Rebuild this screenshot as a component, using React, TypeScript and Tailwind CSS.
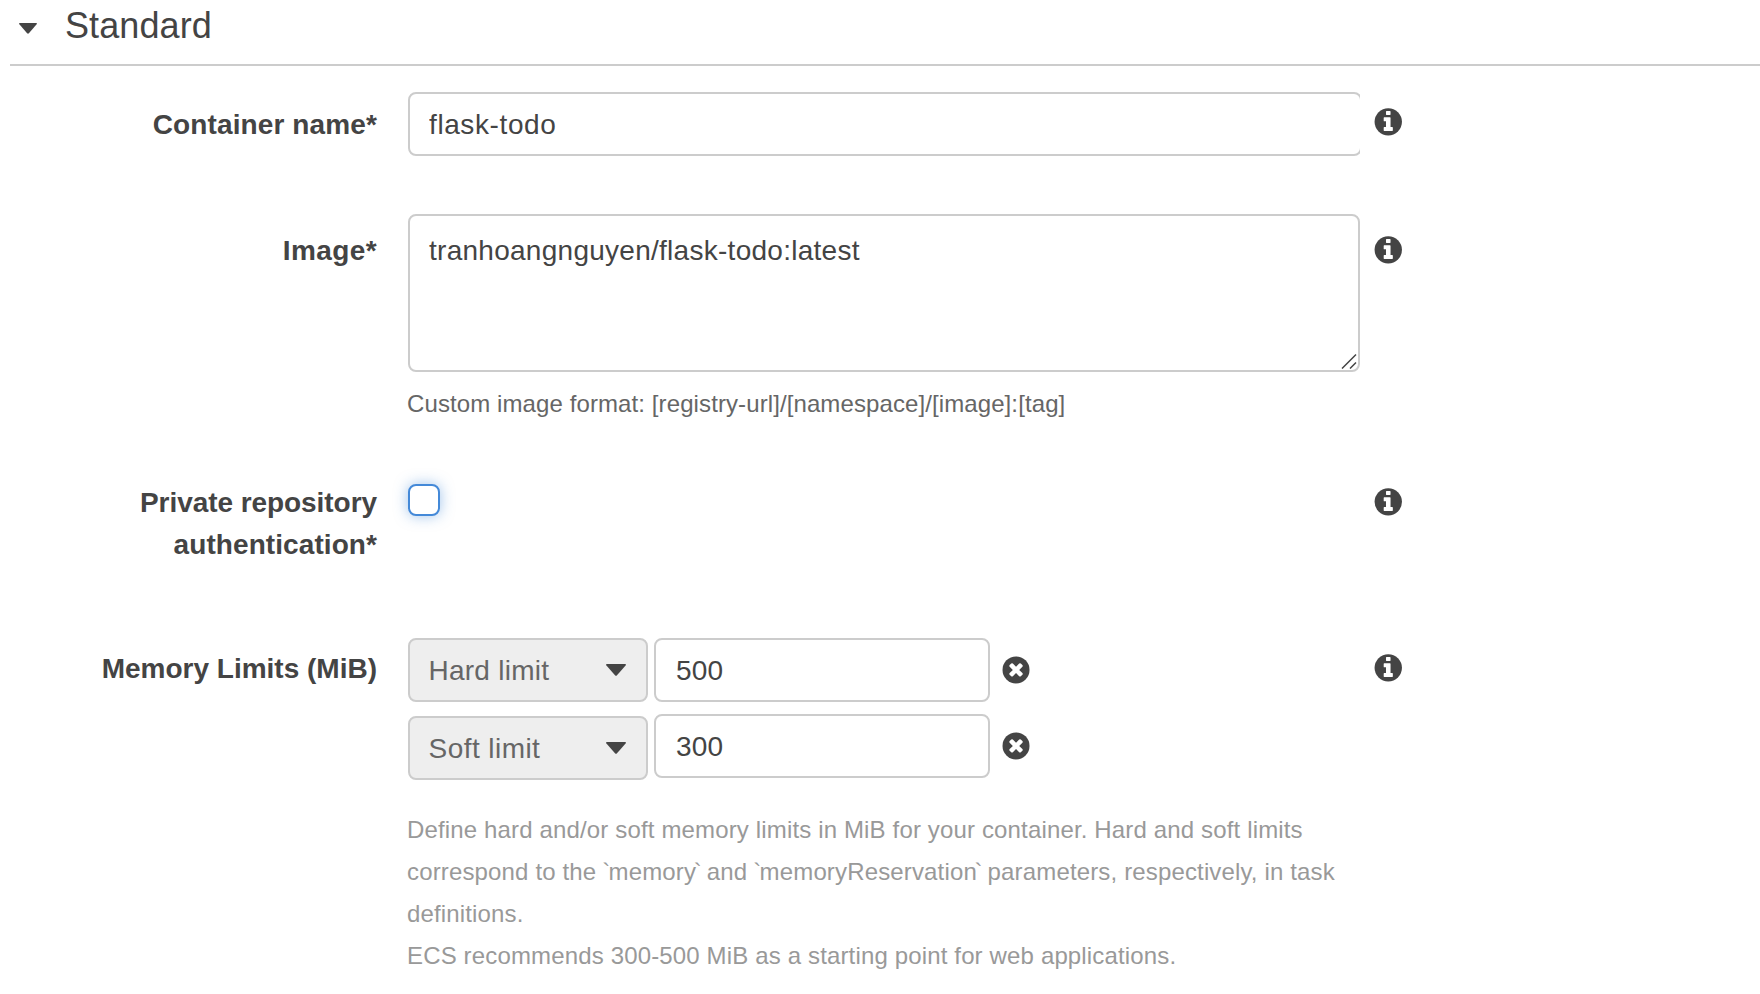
import type { ReactNode } from "react";

const INFO =
  "M1152 1376v-160q0-14-9-23t-23-9h-96v-512q0-14-9-23t-23-9h-320q-14 0-23 9t-9 23v160q0 14 9 23t23 9h96v320h-96q-14 0-23 9t-9 23v160q0 14 9 23t23 9h448q14 0 23-9t9-23zM1024 480v-160q0-14-9-23t-23-9h-192q-14 0-23 9t-9 23v160q0 14 9 23t23 9h192q14 0 23-9t9-23z";
const CROSS =
  "M1277 1122q0-26-19-45l-181-181 181-181q19-19 19-45 0-27-19-46l-90-90q-19-19-46-19-26 0-45 19l-181 181-181-181q-19-19-45-19-27 0-46 19l-90 90q-19 19-19 46 0 26 19 45l181 181-181 181q-19 19-19 45 0 27 19 46l90 90q19 19 46 19 26 0 45-19l181-181 181 181q19 19 45 19 27 0 46-19l90-90q19-19 19-46z";

function InfoIcon() {
  return (
    <svg viewBox="96 119 1570 1570" className="size-7 shrink-0" fill="#444">
      <circle cx="896" cy="896" r="768" />
      <path d={INFO} fill="#fff" />
    </svg>
  );
}

function RemoveIcon() {
  return (
    <svg viewBox="98 105 1593 1593" className="size-7" fill="#444">
      <circle cx="896" cy="896" r="768" />
      <path d={CROSS} fill="#fff" />
    </svg>
  );
}

function Caret({ className }: { className: string }) {
  return (
    <svg viewBox="0 0 20 12" preserveAspectRatio="none" className={className} fill="#444">
      <path d="M0.8 0H19.2Q20.4 0.4 19.6 1.4L11 11.2Q10 12.2 9 11.2L0.4 1.4Q-0.4 0.4 0.8 0Z" />
    </svg>
  );
}

function Code({ children }: { children: string }) {
  return (
    <>
      <span className="-ml-px tracking-[-1.6px]">`</span>
      {children}
      <span className="-ml-[2.5px] tracking-[-1.6px]">`</span>
    </>
  );
}

function Row({ label, labelClass, iconClass, children }: { label: ReactNode; labelClass: string; iconClass: string; children: ReactNode }) {
  return (
    <div className="flex items-start">
      <div className={"w-[377px] shrink-0 text-right text-[28px] leading-[42px] font-bold " + labelClass}>{label}</div>
      <div className="ml-[31px] w-[952px] shrink-0">{children}</div>
      <div className={"ml-[14px] " + iconClass}>
        <InfoIcon />
      </div>
    </div>
  );
}

function Limit({ kind, value, selectClass }: { kind: string; value: string; selectClass: string }) {
  return (
    <div className="flex h-16 items-start">
      <button className={"flex h-16 w-60 items-center justify-between rounded-lg border-2 border-[#ccc] bg-[#eee] pr-5 pl-[18.5px] text-[28px] leading-none text-[#666] " + selectClass}>
        <span className="pt-[2px]">{kind}</span>
        <Caret className="h-3 w-5" />
      </button>
      <input
        defaultValue={value}
        className="ml-1.5 h-16 w-[336px] rounded-lg border-2 border-[#ccc] px-5 pt-[2px] text-[28px] tracking-[0.2px] text-[#444] outline-none"
      />
      <button className="mt-[18px] ml-3">
        <RemoveIcon />
      </button>
    </div>
  );
}

export default function App() {
  return (
    <div className="h-[994px] w-[1760px] overflow-hidden bg-white font-['Liberation_Sans',Arial,sans-serif] text-[#444]">
      <header className="ml-[10px] flex h-[66px] items-start border-b-2 border-[#ccc]">
        <Caret className="mt-[23px] ml-[9px] h-[11px] w-[18px]" />
        <h2 className="mt-[6px] ml-[28px] text-[36px] leading-[40px] tracking-[0.1px]">Standard</h2>
      </header>

      <div className="mt-[26px] h-[122px]">
        <Row label="Container name*" labelClass="pt-[12px] tracking-[0.12px]" iconClass="pt-4">
          <div className="overflow-hidden">
            <input
              defaultValue="flask-todo"
              className="h-16 w-[954px] rounded-lg border-2 border-[#ccc] px-[19px] pt-[2px] text-[28px] tracking-[0.6px] outline-none"
            />
          </div>
        </Row>
      </div>

      <div className="h-[266px]">
        <Row label="Image*" labelClass="pt-4 tracking-[0.4px]" iconClass="pt-[22px]">
          <div className="relative h-[158px]">
            <textarea
              defaultValue="tranhoangnguyen/flask-todo:latest"
              className="h-[158px] w-full resize-none rounded-lg border-2 border-[#ccc] px-[19px] pt-[14px] text-[28px] leading-[42px] tracking-[0.27px] outline-none"
            />
            <svg viewBox="0 0 16 16" className="absolute right-[3px] bottom-[3px] size-4" stroke="#444" strokeWidth="1.5">
              <path d="M1 15.5L15 1.5M9 15.5L15 9.5" />
            </svg>
          </div>
          <p className="mt-[11px] -ml-px text-[24px] leading-[42px] tracking-[0.1px] whitespace-nowrap text-[#666]">
            Custom image format: [registry-url]/[namespace]/[image]:[tag]
          </p>
        </Row>
      </div>

      <div className="h-[158px]">
        <Row
          label={
            <>
              <span className="tracking-[-0.06px]">Private repository</span>
              <br />
              <span className="tracking-[0.08px]">authentication*</span>
            </>
          }
          labelClass="pt-[2px]"
          iconClass="pt-2"
        >
          <div className="mt-1 size-8 rounded-lg border-2 border-[#4489d8] bg-white shadow-[0_0_14px_rgba(68,137,216,0.5)]" />
        </Row>
      </div>

      <Row label="Memory Limits (MiB)" labelClass="pt-[10px]" iconClass="pt-4">
        <Limit kind="Hard limit" value="500" selectClass="tracking-[0.25px]" />
        <div className="mt-3">
          <Limit kind="Soft limit" value="300" selectClass="mt-[2px] tracking-[0.45px]" />
        </div>
        <div className="mt-[31px] -ml-px text-[24px] leading-[42px] tracking-[0.15px] whitespace-nowrap text-[#999]">
          <p>Define hard and/or soft memory limits in MiB for your container. Hard and soft limits</p>
          <p>
            correspond to the <Code>memory</Code> and <Code>memoryReservation</Code> parameters, respectively, in task
          </p>
          <p>definitions.</p>
          <p>ECS recommends 300-500 MiB as a starting point for web applications.</p>
        </div>
      </Row>
    </div>
  );
}
